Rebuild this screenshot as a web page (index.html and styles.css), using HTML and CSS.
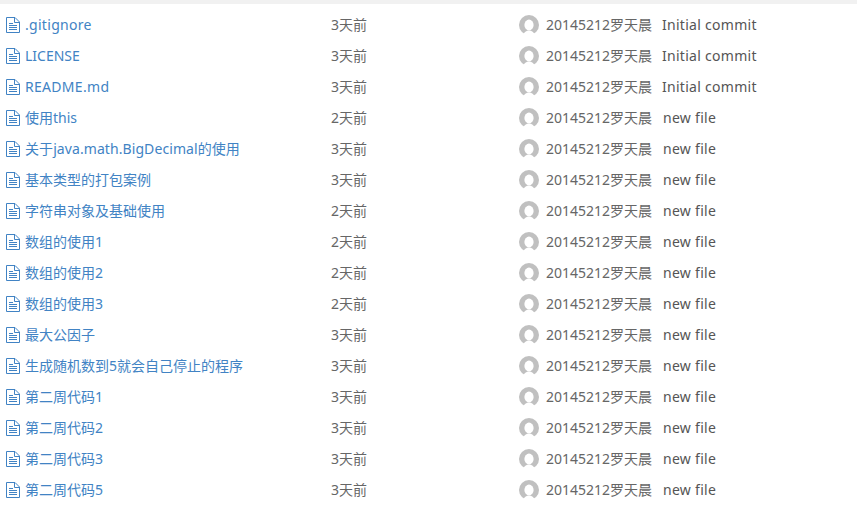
FILE: index.html
```html
<!DOCTYPE html>
<html lang="zh">
<head>
<meta charset="utf-8">
<title>Files</title>
<link rel="stylesheet" href="styles.css">
</head>
<body>
<svg class="defs" width="0" height="0" aria-hidden="true">
<symbol id="file" viewBox="0 0 14 16"><path d="M1 .5H9L13.500 5V15.500H.5V.5Z M8.500 .5V5.500H13.500" fill="none" stroke="#4183c4" stroke-width="1"/><path d="M3 6.500H7M3 8.500H11M3 10.500H11M3 12.500H11" fill="none" stroke="#4183c4" stroke-width="1"/></symbol>
<symbol id="avatar" viewBox="0 0 20 20"><circle cx="10" cy="10" r="10" fill="#c0c0c0"/><ellipse cx="10" cy="10" rx="4.600" ry="5.400" fill="#fff"/><path d="M4 20C4.800 17.500 7.500 15.500 10 15.500S15.200 17.500 16 20Z" fill="#fff"/></symbol>
</svg>
<div class="strip"></div>
<main class="list">
<div class="row"><span class="name"><svg class="ficon"><use href="#file"/></svg><a class="latin">.gitignore</a></span><span class="date">3天前</span><span class="who"><svg class="avatar"><use href="#avatar"/></svg><span class="author">20145212罗天晨</span></span><span class="msg">Initial commit</span></div>
<div class="row"><span class="name"><svg class="ficon"><use href="#file"/></svg><a>LICENSE</a></span><span class="date">3天前</span><span class="who"><svg class="avatar"><use href="#avatar"/></svg><span class="author">20145212罗天晨</span></span><span class="msg">Initial commit</span></div>
<div class="row"><span class="name"><svg class="ficon"><use href="#file"/></svg><a class="latin">README.md</a></span><span class="date">3天前</span><span class="who"><svg class="avatar"><use href="#avatar"/></svg><span class="author">20145212罗天晨</span></span><span class="msg">Initial commit</span></div>
<div class="row"><span class="name"><svg class="ficon"><use href="#file"/></svg><a>使用this</a></span><span class="date">2天前</span><span class="who"><svg class="avatar"><use href="#avatar"/></svg><span class="author">20145212罗天晨</span></span><span class="msg new">new file</span></div>
<div class="row"><span class="name"><svg class="ficon"><use href="#file"/></svg><a class="mixed">关于java.math.BigDecimal的使用</a></span><span class="date">3天前</span><span class="who"><svg class="avatar"><use href="#avatar"/></svg><span class="author">20145212罗天晨</span></span><span class="msg new">new file</span></div>
<div class="row"><span class="name"><svg class="ficon"><use href="#file"/></svg><a>基本类型的打包案例</a></span><span class="date">3天前</span><span class="who"><svg class="avatar"><use href="#avatar"/></svg><span class="author">20145212罗天晨</span></span><span class="msg new">new file</span></div>
<div class="row"><span class="name"><svg class="ficon"><use href="#file"/></svg><a>字符串对象及基础使用</a></span><span class="date">2天前</span><span class="who"><svg class="avatar"><use href="#avatar"/></svg><span class="author">20145212罗天晨</span></span><span class="msg new">new file</span></div>
<div class="row"><span class="name"><svg class="ficon"><use href="#file"/></svg><a>数组的使用1</a></span><span class="date">2天前</span><span class="who"><svg class="avatar"><use href="#avatar"/></svg><span class="author">20145212罗天晨</span></span><span class="msg new">new file</span></div>
<div class="row"><span class="name"><svg class="ficon"><use href="#file"/></svg><a>数组的使用2</a></span><span class="date">2天前</span><span class="who"><svg class="avatar"><use href="#avatar"/></svg><span class="author">20145212罗天晨</span></span><span class="msg new">new file</span></div>
<div class="row"><span class="name"><svg class="ficon"><use href="#file"/></svg><a>数组的使用3</a></span><span class="date">2天前</span><span class="who"><svg class="avatar"><use href="#avatar"/></svg><span class="author">20145212罗天晨</span></span><span class="msg new">new file</span></div>
<div class="row"><span class="name"><svg class="ficon"><use href="#file"/></svg><a>最大公因子</a></span><span class="date">3天前</span><span class="who"><svg class="avatar"><use href="#avatar"/></svg><span class="author">20145212罗天晨</span></span><span class="msg new">new file</span></div>
<div class="row"><span class="name"><svg class="ficon"><use href="#file"/></svg><a>生成随机数到5就会自己停止的程序</a></span><span class="date">3天前</span><span class="who"><svg class="avatar"><use href="#avatar"/></svg><span class="author">20145212罗天晨</span></span><span class="msg new">new file</span></div>
<div class="row"><span class="name"><svg class="ficon"><use href="#file"/></svg><a>第二周代码1</a></span><span class="date">3天前</span><span class="who"><svg class="avatar"><use href="#avatar"/></svg><span class="author">20145212罗天晨</span></span><span class="msg new">new file</span></div>
<div class="row"><span class="name"><svg class="ficon"><use href="#file"/></svg><a>第二周代码2</a></span><span class="date">3天前</span><span class="who"><svg class="avatar"><use href="#avatar"/></svg><span class="author">20145212罗天晨</span></span><span class="msg new">new file</span></div>
<div class="row"><span class="name"><svg class="ficon"><use href="#file"/></svg><a>第二周代码3</a></span><span class="date">3天前</span><span class="who"><svg class="avatar"><use href="#avatar"/></svg><span class="author">20145212罗天晨</span></span><span class="msg new">new file</span></div>
<div class="row"><span class="name"><svg class="ficon"><use href="#file"/></svg><a>第二周代码5</a></span><span class="date">3天前</span><span class="who"><svg class="avatar"><use href="#avatar"/></svg><span class="author">20145212罗天晨</span></span><span class="msg new">new file</span></div>
</main>
</body>
</html>
```
FILE: styles.css
```css
html, body {
  margin: 0;
  padding: 0;
  background: #fff;
  overflow: hidden;
}
body {
  font-family: "Noto Sans", "Noto Sans CJK SC", sans-serif;
  font-size: 14px;
  color: #666;
}
.defs {
  position: absolute;
}
.strip {
  height: 4px;
  background: #f1f1f1;
}
.list {
  padding-top: 5px;
}
.row {
  display: grid;
  grid-template-columns: 331px 188px 143px 1fr;
  height: 31px;
  align-items: center;
  line-height: 31px;
  white-space: nowrap;
}
.name {
  display: flex;
  align-items: center;
  padding-left: 6px;
}
.ficon {
  width: 14px;
  height: 16px;
  margin-right: 5px;
  flex: none;
}
.name a {
  color: #4183c4;
}
.name a.latin {
  letter-spacing: 0.3px;
}
.name a.mixed {
  letter-spacing: 0.08px;
}
.date {
  color: #666;
}
.who {
  display: flex;
  align-items: center;
}
.avatar {
  width: 20px;
  height: 20px;
  margin-right: 7px;
  flex: none;
}
.msg {
  color: #555;
  letter-spacing: 0.28px;
}
.msg.new {
  padding-left: 1px;
}
```
